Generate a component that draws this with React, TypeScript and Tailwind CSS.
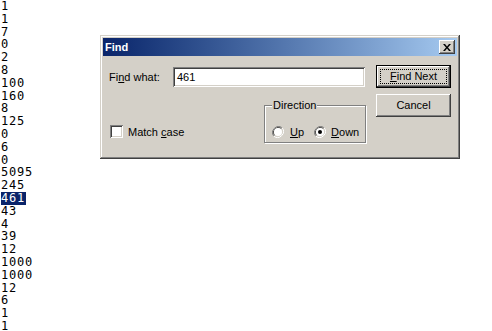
import React from "react";

const nums = ["1","1","7","0","2","8","100","160","8","125","0","6","0","5095","245","461","43","4","39","12","1000","1000","12","6","1","1"];

const raised = "shadow-[inset_-1px_-1px_0_#404040,inset_1px_1px_0_#ffffff,inset_-2px_-2px_0_#808080,inset_2px_2px_0_#d4d0c8]";
const sunken = "shadow-[inset_1px_1px_0_#808080,inset_-1px_-1px_0_#ffffff,inset_2px_2px_0_#404040,inset_-2px_-2px_0_#d4d0c8]";

function Radio({ checked }: { checked: boolean }) {
  return (
    <svg width="12" height="12" viewBox="0 0 12 12" className="shrink-0">
      <path d="M10.2 1.8 A6 6 0 0 0 1.8 10.2" fill="none" stroke="#808080" strokeWidth="1" />
      <path d="M1.8 10.2 A6 6 0 0 0 10.2 1.8" fill="none" stroke="#ffffff" strokeWidth="1" />
      <path d="M9.5 2.5 A5 5 0 0 0 2.5 9.5" fill="none" stroke="#404040" strokeWidth="1" />
      <path d="M2.5 9.5 A5 5 0 0 0 9.5 2.5" fill="none" stroke="#d4d0c8" strokeWidth="1" />
      <circle cx="6" cy="6" r="4" fill="#ffffff" />
      {checked && <circle cx="6" cy="6" r="2" fill="#000000" />}
    </svg>
  );
}

export default function App() {
  return (
    <div className="relative w-[492px] h-[331px] bg-white overflow-hidden">
      <div className="pl-[1px] text-black text-[12px] leading-[12.8px] tracking-[0.8px]" style={{ fontFamily: '"DejaVu Sans Mono", monospace' }}>
        {nums.map((n, i) =>
          i === 15 ? (
            <div key={i} className="w-fit bg-[#0a246a] text-white pr-[1px]">{n}</div>
          ) : (
            <div key={i}>{n}</div>
          )
        )}
      </div>

      <div
        className={`absolute left-[100px] top-[35px] w-[360px] h-[124px] bg-[#d4d0c8] p-[3px] text-[11px] text-black shadow-[inset_-1px_-1px_0_#404040,inset_1px_1px_0_#d4d0c8,inset_-2px_-2px_0_#808080,inset_2px_2px_0_#ffffff]`}
        style={{ fontFamily: '"Liberation Sans", Arial, sans-serif' }}
      >
        <div className="h-[18px] flex items-center justify-between bg-linear-to-r from-[#0a246a] to-[#a6caf0] pl-[2px] pr-[2px]">
          <span className="font-bold text-white text-[11px]">Find</span>
          <div className={`w-[16px] h-[14px] bg-[#d4d0c8] ${raised} flex items-center justify-center`}>
            <svg width="8" height="7" viewBox="0 0 8 7">
              <path d="M0 0h2l2 2.5L6 0h2L5 3.5 8 7H6L4 4.5 2 7H0l3-3.5z" fill="#000" />
            </svg>
          </div>
        </div>

        <div className="flex pl-[6px] pt-[9px]">
          <div className="w-[257px] flex flex-col">
            <div className="flex items-center h-[20px] mt-[2px]">
              <span className="w-[64px]">Fi<u>n</u>d what:</span>
              <div className={`w-[192px] h-[20px] bg-white ${sunken} flex items-center pl-[4px]`}>461</div>
            </div>
            <div className="flex justify-between items-end mt-[18px]">
              <div className="flex items-center gap-[5px] ml-[1px] mb-[3px]">
                <div className={`w-[13px] h-[13px] bg-white ${sunken}`} />
                <span>Match <u>c</u>ase</span>
              </div>
              <div className="relative w-[102px] h-[38px] border border-[#808080] shadow-[inset_1px_1px_0_#ffffff,1px_1px_0_#ffffff]">
                <span className="absolute left-[7px] top-[-8px] bg-[#d4d0c8] px-[1px] leading-[14px]">Direction</span>
                <div className="flex items-center pl-[7px] pt-[18px]">
                  <Radio checked={false} />
                  <span className="ml-[6px]"><u>U</u>p</span>
                  <span className="ml-[10px]"><Radio checked={true} /></span>
                  <span className="ml-[5px]"><u>D</u>own</span>
                </div>
              </div>
            </div>
          </div>

          <div className="ml-[10px] flex flex-col gap-[6px]">
            <div className="w-[75px] h-[23px] border border-black">
              <div className={`w-full h-full ${raised} p-[3px]`}>
                <div className="w-full h-full border border-dotted border-black flex items-center justify-center">
                  <span><u>F</u>ind Next</span>
                </div>
              </div>
            </div>
            <div className={`w-[75px] h-[23px] ${raised} flex items-center justify-center`}>
              Cancel
            </div>
          </div>
        </div>
      </div>
    </div>
  );
}
